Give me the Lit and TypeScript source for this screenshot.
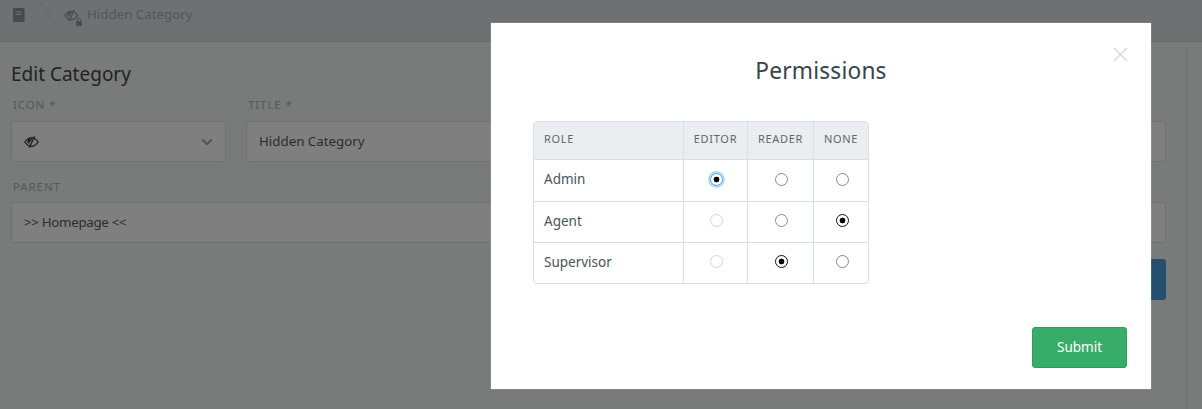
import { LitElement, html, css, svg } from "lit";
import { customElement } from "lit/decorators.js";

const eye = svg`<path d="M1 7.5C3.5 3.8 6 2.5 8.5 2.5S13.5 3.8 16 7.5C13.5 11.2 11 12.5 8.5 12.5S3.5 11.2 1 7.5Z" fill="none" stroke="currentColor" stroke-width="1.5"/><path d="M9.5 4.2A3.4 3.4 0 0 0 5.2 9.5Z" fill="currentColor"/><path d="M12 1L6 14" stroke="currentColor" stroke-width="1.6"/>`;

@customElement("app-root")
export class AppRoot extends LitElement {
  static styles = css`
    :host { display: block; width: 1202px; height: 409px; position: relative; overflow: hidden; font-family: "Noto Sans", sans-serif; font-size: 14px; color: #38444b; background: #f3f5f5; }
    .page { height: 409px; display: flex; flex-direction: column; }
    .crumbs { height: 42px; box-sizing: border-box; flex: none; background: #dfe1e4; border-bottom: 1px solid #cdd1d3; display: flex; align-items: flex-start; overflow: hidden; }
    .book { margin: 8px 0 0 13px; width: 12px; height: 14px; color: #8e9499; }
    .chev { margin-left: 13px; width: 14px; height: 32px; color: #c6cacd; }
    .hc { margin: 10px 0 0 12px; width: 18px; height: 17px; color: #949a9f; }
    .crumb { margin: 4px 0 0 5px; color: #a8aeb2; font-size: 13.3px; line-height: 20px; }
    .main { flex: 1; display: flex; }
    .form { width: 1187px; box-sizing: border-box; padding: 19px 20px 0 11px; border-right: 1px solid #e4e6e7; flex: none; }
    h1 { margin: 0 0 9px; font-weight: 400; font-size: 19px; line-height: 26px; color: #3f484e; }
    .row { display: flex; gap: 20px; margin-bottom: 15px; }
    .row.last { margin-bottom: 16px; }
    .field { display: flex; flex-direction: column; }
    .icon-f { width: 215px; flex: none; }
    .title-f { flex: 1; }
    label { font-size: 11.5px; letter-spacing: .9px; line-height: 16px; color: #aeb3b6; height: 24px; padding-top: 1px; margin-left: 2px; }
    .row.last label { height: 23px; padding-top: 2px; }
    .box { height: 41px; box-sizing: border-box; border: 1px solid #dde1e3; border-radius: 3px; background: #fff; padding: 0 12px 2px; display: flex; align-items: center; justify-content: space-between; color: #565c60; font-size: 13.3px; }
    .parent { letter-spacing: -.3px; }
    .box svg.e { width: 15px; height: 14px; color: #3a3f44; margin-top: 2px; }
    .box svg.c { width: 12px; height: 8px; color: #a0a5a9; margin: 3px 0 0; }
    .save { margin: 0 0 0 auto; width: 110px; height: 41px; background: #4a9fdc; border-radius: 3px; }
    .overlay { position: absolute; inset: 0; background: rgba(0,0,0,.5); }
    .modal { position: absolute; left: 491px; top: 23px; width: 660px; height: 366px; box-sizing: border-box; background: #fff; box-shadow: 0 0 1px rgba(255,255,255,.6); display: flex; flex-direction: column; padding: 28px 24px 21px 42px; }
    .close { position: absolute; right: 23px; top: 24px; width: 15px; height: 15px; color: #d9d9d9; }
    h2 { margin: 0 18px 30px 0; text-align: center; font-weight: 400; font-size: 22.7px; line-height: 40px; color: #38444b; letter-spacing: .2px; }
    .foot { margin-top: auto; display: flex; justify-content: flex-end; }
    table { border-collapse: separate; border-spacing: 0; width: 336px; table-layout: fixed; border: 1px solid #d8e0e5; border-radius: 4px; font-size: 13.5px; }
    th { background: #eaeef0; font-weight: 400; font-size: 11px; letter-spacing: .7px; height: 37px; box-sizing: content-box; padding: 0; color: #5f666b; text-align: center; border-bottom: 1px solid #d8e0e5; border-left: 1px solid #d8e0e5; line-height: 34px; vertical-align: top; }
    th:first-child, td:first-child { border-left: 0; text-align: left; padding-left: 10px; }
    th:first-child { border-top-left-radius: 3px; }
    th:last-child { border-top-right-radius: 3px; }
    td { height: 41px; box-sizing: border-box; padding: 0 0 3px 2px; text-align: center; border-bottom: 1px solid #d8e0e5; border-left: 1px solid #d8e0e5; color: #49545b; }
    tbody tr:first-child td { height: 42px; }
    tbody tr:last-child td { height: 40px; border-bottom: 0; }
    input { appearance: none; display: block; margin: 0 auto; width: 11px; height: 11px; border: 1px solid #8a8a8a; border-radius: 50%; background: #fff; box-sizing: content-box; }
    input:disabled { border-color: #d5d5d5; }
    input:checked { border-color: #111; background: radial-gradient(circle, #000 0 2.6px, #fff 3.2px); }
    input.focus { box-shadow: 0 0 0 2px #b5dcf5; border-color: #4b9fd8; }
    .submit { width: 95px; height: 41px; background: #38ad69; border: 1px solid #2f9c5d; border-radius: 3px; color: #fff; font: inherit; font-size: 13.5px; padding: 0 0 2px; }
    col.role { width: 149px; } col.ed { width: 64px; } col.re { width: 66px; }
  `;

  private radios(checked: number, disabledFirst: boolean, focus = false) {
    return [0, 1, 2].map((i) => html`<td><input type="radio" class=${focus && i === checked ? "focus" : ""} ?checked=${i === checked} ?disabled=${disabledFirst && i === 0} /></td>`);
  }

  render() {
    return html`
      <div class="page">
        <div class="crumbs">
          <svg class="book" viewBox="0 0 12 14"><path d="M0 1Q0 0 1 0H10Q11 0 11 1V13Q11 14 10 14H1Q0 14 0 13Z" fill="currentColor"/><path d="M11 1H12V14H2V13.5H11Z" fill="currentColor" opacity=".6"/><path d="M2.5 4H8.5M2.5 6.5H8.5" stroke="#dfe1e4" stroke-width="1.2"/></svg>
          <svg class="chev" viewBox="0 0 14 32"><path d="M0 0L13 15.5L0 31" fill="none" stroke="currentColor"/></svg>
          <svg class="hc" viewBox="0 0 18 17"><g transform="translate(0,-1) scale(.85)">${eye}</g><rect x="12" y="11" width="6" height="5" rx=".7" fill="currentColor"/><path d="M13.5 11V9.6a1.5 1.5 0 0 1 3 0V11" fill="none" stroke="currentColor"/></svg>
          <span class="crumb">Hidden Category</span>
        </div>
        <div class="main">
          <div class="form">
            <h1>Edit Category</h1>
            <div class="row">
              <div class="field icon-f"><label>ICON *</label>
                <div class="box"><svg class="e" viewBox="0 0 17 15">${eye}</svg><svg class="c" viewBox="0 0 14 9"><path d="M1.5 1.5L7 7L12.5 1.5" fill="none" stroke="currentColor" stroke-width="2.4"/></svg></div>
              </div>
              <div class="field title-f"><label>TITLE *</label><div class="box">Hidden Category</div></div>
            </div>
            <div class="row last">
              <div class="field title-f"><label>PARENT</label><div class="box parent">&gt;&gt; Homepage &lt;&lt;</div></div>
            </div>
            <div class="save"></div>
          </div>
        </div>
      </div>
      <div class="overlay"></div>
      <div class="modal">
        <svg class="close" viewBox="0 0 15 15"><path d="M1 1L14 14M14 1L1 14" stroke="currentColor" stroke-width="1.6"/></svg>
        <h2>Permissions</h2>
        <table>
          <colgroup><col class="role"/><col class="ed"/><col class="re"/><col/></colgroup>
          <thead><tr><th>ROLE</th><th>EDITOR</th><th>READER</th><th>NONE</th></tr></thead>
          <tbody>
            <tr><td>Admin</td>${this.radios(0, false, true)}</tr>
            <tr><td>Agent</td>${this.radios(2, true)}</tr>
            <tr><td>Supervisor</td>${this.radios(1, true)}</tr>
          </tbody>
        </table>
        <div class="foot"><button class="submit">Submit</button></div>
      </div>
    `;
  }
}
